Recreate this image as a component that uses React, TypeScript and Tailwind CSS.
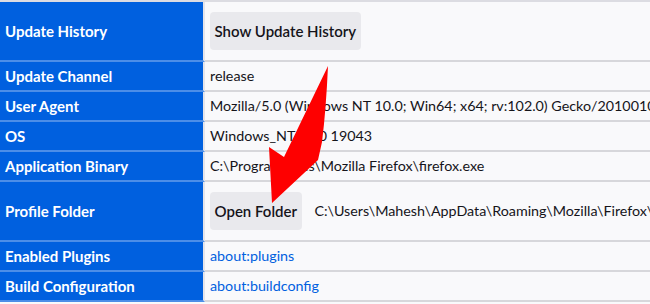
import React from 'react';

type Row = {
  label: string;
  tall?: boolean;
  content: React.ReactNode;
};

const btn =
  'h-[38px] px-[4.5px] rounded-[4px] bg-[#e9e9ed] text-[#15141a] font-semibold text-[15px] leading-none flex items-center';

const rows: Row[] = [
  {
    label: 'Update History',
    tall: true,
    content: <button className={btn}>Show Update History</button>,
  },
  { label: 'Update Channel', content: <span>release</span> },
  {
    label: 'User Agent',
    content: (
      <span>Mozilla/5.0 (Windows NT 10.0; Win64; x64; rv:102.0) Gecko/20100101 Firefox/102.0</span>
    ),
  },
  { label: 'OS', content: <span>Windows_NT 10.0 19043</span> },
  {
    label: 'Application Binary',
    content: <span>C:\Program Files\Mozilla Firefox\firefox.exe</span>,
  },
  {
    label: 'Profile Folder',
    tall: true,
    content: (
      <>
        <button className={btn}>Open Folder</button>
        <span className="ml-[13px]">
          C:\Users\Mahesh\AppData\Roaming\Mozilla\Firefox\Profiles\default-release
        </span>
      </>
    ),
  },
  {
    label: 'Enabled Plugins',
    content: <span className="text-[#0060df]">about:plugins</span>,
  },
  {
    label: 'Build Configuration',
    content: <span className="text-[#0060df]">about:buildconfig</span>,
  },
];

export default function App() {
  return (
    <div
      className="relative w-[650px] h-[304px] overflow-hidden bg-[#f9f9fb]"
      style={{ fontFamily: 'Lato, "Noto Sans", sans-serif' }}
    >
      <div className="flex flex-col border-t-2 border-[#dcdce2]">
        {rows.map((r) => (
          <div key={r.label} className={`flex ${r.tall ? 'h-[60px]' : 'h-[30px]'}`}>
            <div className="w-[205px] shrink-0 bg-[#0060df] border-b-2 border-r-2 border-b-[#4c8ee8] border-r-[#e4e4ea] flex items-center pl-[5px] text-white font-bold text-[15px] whitespace-nowrap">
              {r.label}
            </div>
            <div className="flex-1 min-w-0 border-b-2 border-[#d7d7db] flex items-center pl-[5px] text-[14.3px] text-[#15141a] whitespace-nowrap overflow-hidden">
              {r.content}
            </div>
          </div>
        ))}
      </div>

      {/* red annotation arrow */}
      <svg className="absolute left-0 top-0 pointer-events-none" width="650" height="304" viewBox="0 0 650 304">
        <path
          d="M328 66 Q326 110 322 142 L318 160 L272 203 L269 147 L284 157 L328 66 Z"
          fill="#fe0000"
        />
      </svg>
    </div>
  );
}
